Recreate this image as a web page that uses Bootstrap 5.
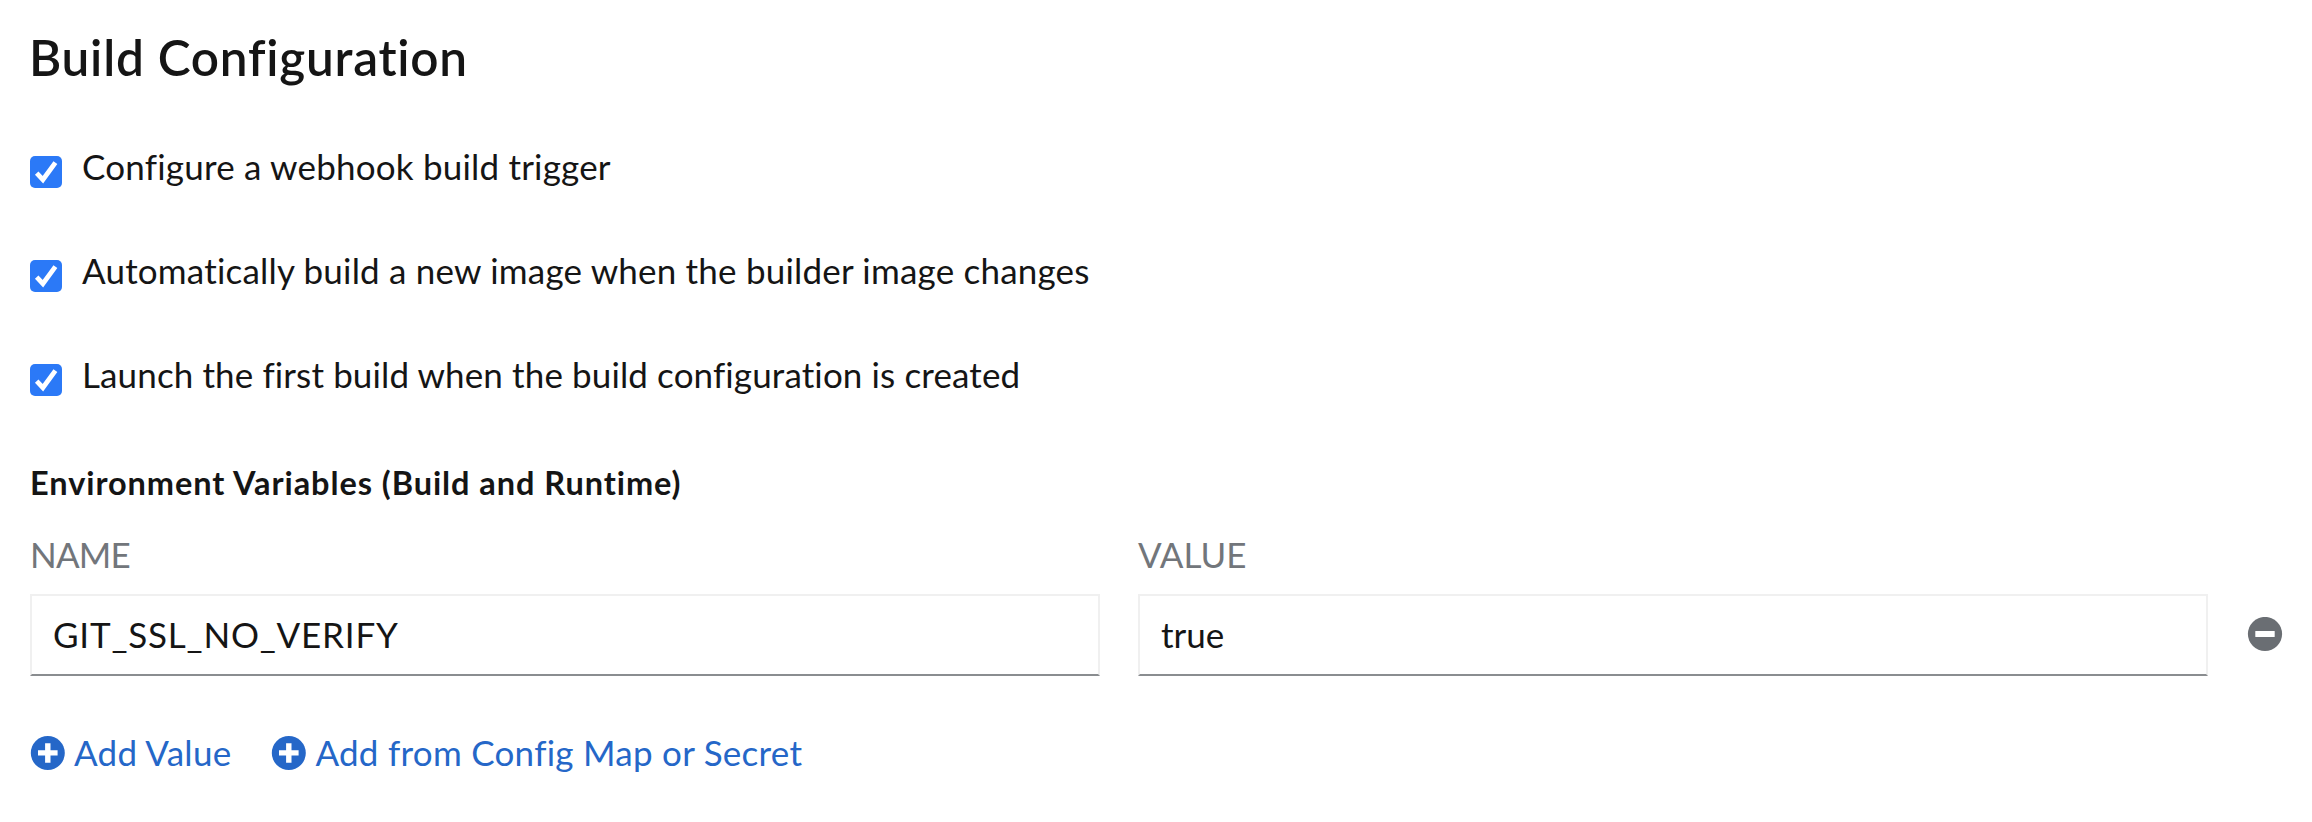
<!DOCTYPE html>
<html lang="en">
<head>
<meta charset="utf-8">
<title>Build Configuration</title>
<link href="https://cdn.jsdelivr.net/npm/bootstrap@5.3.0/dist/css/bootstrap.min.css" rel="stylesheet">
<style>
  body { font-family: Lato, "Open Sans", sans-serif; font-size: 35px; line-height: 50px; color: #151515; background: #fff; }
  .build-form { padding: 27px 30px 0; }
  .section-title { font-size: 49.5px; font-weight: 600; line-height: 60px; letter-spacing: .76px; margin: 0 0 53px -1px; }
  .options { gap: 50px; }
  .option { height: 54px; line-height: 52px; letter-spacing: .2px; gap: 20px; }
  .option:last-child { letter-spacing: .12px; }
  .option .form-check-input { width: 32px; height: 32px; margin: 16px 0 0; border: 0; border-radius: 5px; flex: none; }
  .option .form-check-input:checked {
    background-color: #2b79f7; background-size: 32px 32px;
    background-image: url("data:image/svg+xml,%3csvg xmlns='http://www.w3.org/2000/svg' viewBox='0 0 32 32'%3e%3cpath d='M6.7 17.2L12.9 23.7L25.4 6.7' fill='none' stroke='%23fff' stroke-width='4.8'/%3e%3c/svg%3e");
  }
  .env-title { font-size: 32.5px; font-weight: 700; line-height: 48px; letter-spacing: .93px; margin: 57px 0 23px; }
  .env-row { gap: 38px; }
  .env-label { color: #72767b; margin-bottom: 16px; line-height: 48px; }
  .env-input { height: 82px; padding: 0 21px 2px; font-size: 35px; color: #151515; border: 2px solid #f0f0f0; border-bottom-color: #8a8d90; border-radius: 0; }
  .track-name { letter-spacing: -.8px; }
  .track-key { letter-spacing: .79px; }
  .remove-btn { color: #6a6e73; width: 37px; height: 82px; margin-right: -1px; }
  .env-actions { margin-top: 52px; gap: 40px; }
  .add-link { color: #2567c8; height: 50px; line-height: 48px; gap: 9px; letter-spacing: .27px; }
  .add-link span { height: 50px; }
</style>
</head>
<body>
<main class="build-form">
  <h1 class="section-title">Build Configuration</h1>

  <div class="options d-flex flex-column">
    <div class="option d-flex align-items-start">
      <input class="form-check-input" type="checkbox" id="webhook" checked>
      <label for="webhook">Configure a webhook build trigger</label>
    </div>
    <div class="option d-flex align-items-start">
      <input class="form-check-input" type="checkbox" id="auto" checked>
      <label for="auto">Automatically build a new image when the builder image changes</label>
    </div>
    <div class="option d-flex align-items-start">
      <input class="form-check-input" type="checkbox" id="launch" checked>
      <label for="launch">Launch the first build when the build configuration is created</label>
    </div>
  </div>

  <h2 class="env-title">Environment Variables (Build and Runtime)</h2>

  <div class="env-row d-flex align-items-end">
    <div class="flex-fill">
      <label class="env-label d-block track-name" for="env-name">NAME</label>
      <input class="form-control env-input track-key" id="env-name" type="text" value="GIT_SSL_NO_VERIFY">
    </div>
    <div class="flex-fill">
      <label class="env-label d-block" for="env-value">VALUE</label>
      <input class="form-control env-input" id="env-value" type="text" value="true">
    </div>
    <button class="remove-btn btn p-0 border-0 d-flex align-items-center justify-content-center flex-shrink-0" type="button" aria-label="Remove">
      <svg width="37" height="36" viewBox="0 0 37 36"><circle cx="19" cy="17" r="17.1" fill="currentColor"/><rect x="9.3" y="14" width="19.4" height="6" rx=".6" fill="#fff"/></svg>
    </button>
  </div>

  <div class="env-actions d-flex">
    <a class="add-link d-flex align-items-center text-decoration-none" href="#">
      <svg width="35" height="34" viewBox="0 0 35 34"><circle cx="17.8" cy="17" r="17" fill="currentColor"/><path d="M15.1 7.2h5.4v7h7.1v5.4h-7.1v7.2h-5.4v-7.2H8v-5.4h7.1z" fill="#fff"/></svg>
      <span>Add Value</span>
    </a>
    <a class="add-link d-flex align-items-center text-decoration-none" href="#">
      <svg width="35" height="34" viewBox="0 0 35 34"><circle cx="17.8" cy="17" r="17" fill="currentColor"/><path d="M15.1 7.2h5.4v7h7.1v5.4h-7.1v7.2h-5.4v-7.2H8v-5.4h7.1z" fill="#fff"/></svg>
      <span>Add from Config Map or Secret</span>
    </a>
  </div>
</main>
<script src="https://cdn.jsdelivr.net/npm/bootstrap@5.3.0/dist/js/bootstrap.bundle.min.js"></script>
</body>
</html>
